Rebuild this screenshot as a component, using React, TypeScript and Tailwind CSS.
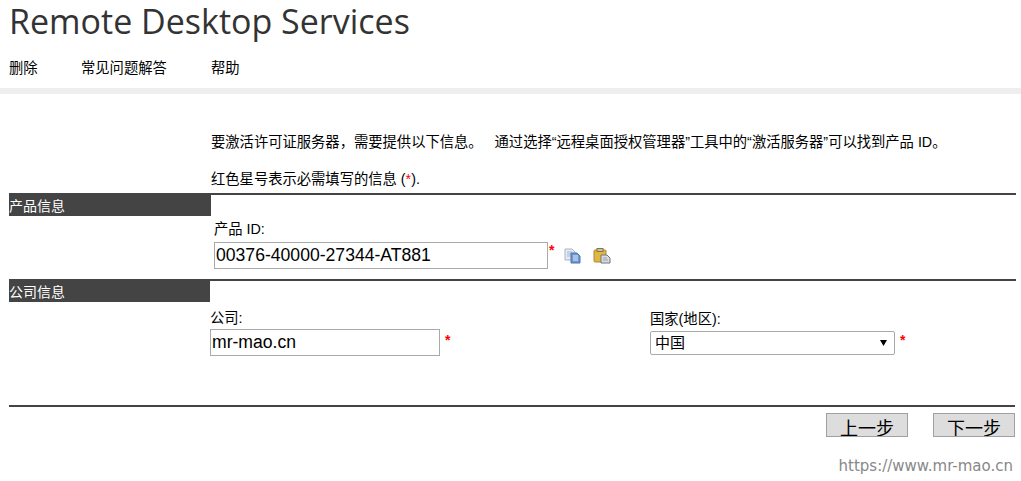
import React from 'react';

const cjk = '"Liberation Sans", "Noto Sans CJK SC", sans-serif';

const CopyIcon = () => (
  <svg width="18" height="16" viewBox="0 0 18 16">
    <path d="M1 1h7l3 3v8H1z" fill="#e6ebf3" stroke="#a9b5c8" />
    <path d="M3 4h5M3 6h5M3 8h5" stroke="#a9b8cf" />
    <path d="M7 5h6l3 3v7H7z" fill="#6f97d2" stroke="#4a72b0" />
    <path d="M9 8h5M9 10h5M9 12h5" stroke="#e4ecf8" />
  </svg>
);

const PasteIcon = () => (
  <svg width="18" height="16" viewBox="0 0 18 16">
    <rect x="1" y="2" width="12" height="12" rx="1" fill="#e3b73f" stroke="#a98a3a" />
    <rect x="4" y="0.500" width="6" height="3" fill="#c9c2a6" stroke="#85754a" />
    <path d="M8 7h6l3 3v5H8z" fill="#d9dde2" stroke="#6f7680" />
    <path d="M10 10h4M10 12h5" stroke="#9aa1aa" />
  </svg>
);

const Star = ({ className }: { className: string }) => (
  <span className={`text-[#ff0000] text-[14px] font-bold leading-none ${className}`}>*</span>
);

const SectionHead = ({ title, width }: { title: string; width: string }) => (
  <div className="border-t-2 border-[#444444] mr-[5px] ml-[9px]">
    <div className={`h-[21px] bg-[#444444] text-white text-[14px] leading-[23px] ${width}`}>{title}</div>
  </div>
);

export default function App() {
  return (
    <div className="w-[1021px] h-[481px] overflow-hidden bg-white text-black text-[14.300px]" style={{ fontFamily: cjk }}>
      <h1
        className="pl-[9px] h-[45px] text-[34px] leading-[42px] text-[#333333]"
        style={{ fontFamily: '"Open Sans", sans-serif' }}
      >
        Remote Desktop Services
      </h1>

      <div className="flex h-[43px] pl-[9px] pt-[13px] leading-[20px] text-black">
        <span className="w-[72px]">删除</span>
        <span className="w-[130px]">常见问题解答</span>
        <span>帮助</span>
      </div>

      <div className="h-[6px] bg-[#eeeeee]" />

      <div className="pl-[211px] pt-[38px] leading-[20px]">
        要激活许可证服务器，需要提供以下信息。&nbsp;&nbsp; 通过选择“远程桌面授权管理器”工具中的“激活服务器”可以找到产品 ID。
      </div>
      <div className="pl-[211px] pt-[17px] h-[41px] leading-[20px]">
        红色星号表示必需填写的信息 (<span className="text-[#ff0000]">*</span>).
      </div>

      <SectionHead title="产品信息" width="w-[202px]" />

      <div className="h-[63px] pl-[214px] pt-[3px]">
        <div className="leading-[20px] h-[23px]">产品 ID:</div>
        <div className="flex items-start">
          <div className="w-[334px] h-[27px] border border-[#a9a9a9] pl-[1px] text-[17.600px] leading-[25px]">
            00376-40000-27344-AT881
          </div>
          <Star className="ml-[1px] mt-[1px] w-[15px]" />
          <div className="mt-[6px] mr-[11px]"><CopyIcon /></div>
          <div className="mt-[6px]"><PasteIcon /></div>
        </div>
      </div>

      <SectionHead title="公司信息" width="w-[201px]" />

      <div className="flex h-[103px] pt-[6px]">
        <div className="ml-[210px] w-[440px]">
          <div className="leading-[20px] h-[21px]">公司:</div>
          <div className="flex items-start">
            <div className="w-[230px] h-[27px] border border-[#a9a9a9] pl-[1px] text-[17.600px] leading-[25px]">
              mr-mao.cn
            </div>
            <Star className="ml-[5px] mt-[4px]" />
          </div>
        </div>
        <div>
          <div className="leading-[22px] h-[23px]">国家(地区):</div>
          <div className="flex items-start">
            <div className="flex items-center justify-between w-[245px] h-[24px] border border-[#a9a9a9] rounded-[2px] pl-[4px] pr-[7px] text-[15px]">
              <span>中国</span>
              <svg width="7" height="6" viewBox="0 0 7 6"><path d="M0 0h7L3.500 6z" fill="#000000" /></svg>
            </div>
            <Star className="ml-[5px] mt-[2px]" />
          </div>
        </div>
      </div>

      <div className="border-t-2 border-[#444444] ml-[9px] mr-[6px] flex justify-end gap-[25px] pt-[6px]">
        <button className="w-[82px] h-[24px] bg-[#dddddd] border border-[#a0a0a0] text-[18px] leading-[31px] overflow-hidden">上一步</button>
        <button className="w-[82px] h-[24px] bg-[#dddddd] border border-[#a0a0a0] text-[18px] leading-[31px] overflow-hidden">下一步</button>
      </div>

      <div
        className="mt-[17px] pr-[8px] text-right text-[15px] leading-[24px] text-[#888888]"
        style={{ fontFamily: '"DejaVu Sans", sans-serif' }}
      >
        https://www.mr-mao.cn
      </div>
    </div>
  );
}
